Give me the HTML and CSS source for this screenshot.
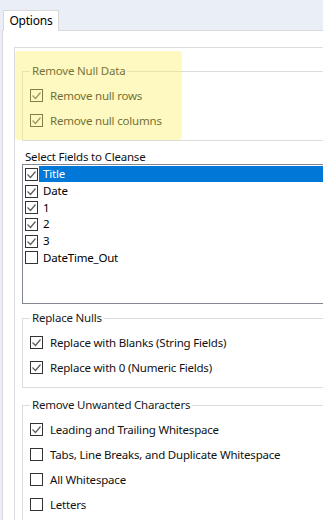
FILE: index.html
```html
<!DOCTYPE html>
<html>
<head>
<meta charset="utf-8">
<link rel="stylesheet" href="styles.css">
</head>
<body>
<div class="tabs"><div class="tab">Options</div></div>
<div class="panel">
  <div class="inner">
    <fieldset class="group g1">
      <legend>Remove Null Data</legend>
      <div class="row"><svg class="cb" viewBox="0 0 13 13"><rect x="0.5" y="0.5" width="12" height="12" fill="#fff" stroke="#333"/><path d="M2.5 6.5l3 3 5-6" fill="none" stroke="#5c5c5c" stroke-width="1.2"/></svg><span>Remove null rows</span></div>
      <div class="row"><svg class="cb" viewBox="0 0 13 13"><rect x="0.5" y="0.5" width="12" height="12" fill="#fff" stroke="#333"/><path d="M2.5 6.5l3 3 5-6" fill="none" stroke="#5c5c5c" stroke-width="1.2"/></svg><span>Remove null columns</span></div>
    </fieldset>
    <div class="list-label">Select Fields to Cleanse</div>
    <div class="listbox">
      <div class="item"><svg class="cb" viewBox="0 0 13 13"><rect x="0.5" y="0.5" width="12" height="12" fill="#fff" stroke="#333"/><path d="M2.5 6.5l3 3 5-6" fill="none" stroke="#5c5c5c" stroke-width="1.2"/></svg><span class="txt sel">Title</span></div>
      <div class="item"><svg class="cb" viewBox="0 0 13 13"><rect x="0.5" y="0.5" width="12" height="12" fill="#fff" stroke="#333"/><path d="M2.5 6.5l3 3 5-6" fill="none" stroke="#5c5c5c" stroke-width="1.2"/></svg><span class="txt">Date</span></div>
      <div class="item"><svg class="cb" viewBox="0 0 13 13"><rect x="0.5" y="0.5" width="12" height="12" fill="#fff" stroke="#333"/><path d="M2.5 6.5l3 3 5-6" fill="none" stroke="#5c5c5c" stroke-width="1.2"/></svg><span class="txt">1</span></div>
      <div class="item"><svg class="cb" viewBox="0 0 13 13"><rect x="0.5" y="0.5" width="12" height="12" fill="#fff" stroke="#333"/><path d="M2.5 6.5l3 3 5-6" fill="none" stroke="#5c5c5c" stroke-width="1.2"/></svg><span class="txt">2</span></div>
      <div class="item"><svg class="cb" viewBox="0 0 13 13"><rect x="0.5" y="0.5" width="12" height="12" fill="#fff" stroke="#333"/><path d="M2.5 6.5l3 3 5-6" fill="none" stroke="#5c5c5c" stroke-width="1.2"/></svg><span class="txt">3</span></div>
      <div class="item"><svg class="cb" viewBox="0 0 13 13"><rect x="0.5" y="0.5" width="12" height="12" fill="#fff" stroke="#333"/></svg><span class="txt">DateTime_Out</span></div>
    </div>
    <fieldset class="group g2">
      <legend>Replace Nulls</legend>
      <div class="row"><svg class="cb" viewBox="0 0 13 13"><rect x="0.5" y="0.5" width="12" height="12" fill="#fff" stroke="#333"/><path d="M2.5 6.5l3 3 5-6" fill="none" stroke="#5c5c5c" stroke-width="1.2"/></svg><span>Replace with Blanks (String Fields)</span></div>
      <div class="row"><svg class="cb" viewBox="0 0 13 13"><rect x="0.5" y="0.5" width="12" height="12" fill="#fff" stroke="#333"/><path d="M2.5 6.5l3 3 5-6" fill="none" stroke="#5c5c5c" stroke-width="1.2"/></svg><span>Replace with 0 (Numeric Fields)</span></div>
    </fieldset>
    <fieldset class="group g3">
      <legend>Remove Unwanted Characters</legend>
      <div class="row"><svg class="cb" viewBox="0 0 13 13"><rect x="0.5" y="0.5" width="12" height="12" fill="#fff" stroke="#333"/><path d="M2.5 6.5l3 3 5-6" fill="none" stroke="#5c5c5c" stroke-width="1.2"/></svg><span>Leading and Trailing Whitespace</span></div>
      <div class="row"><svg class="cb" viewBox="0 0 13 13"><rect x="0.5" y="0.5" width="12" height="12" fill="#fff" stroke="#333"/></svg><span>Tabs, Line Breaks, and Duplicate Whitespace</span></div>
      <div class="row"><svg class="cb" viewBox="0 0 13 13"><rect x="0.5" y="0.5" width="12" height="12" fill="#fff" stroke="#333"/></svg><span>All Whitespace</span></div>
      <div class="row"><svg class="cb" viewBox="0 0 13 13"><rect x="0.5" y="0.5" width="12" height="12" fill="#fff" stroke="#333"/></svg><span>Letters</span></div>
    </fieldset>
  </div>
</div>
<div class="highlight"></div>
</body>
</html>
```
FILE: styles.css
```css
html, body {
  margin: 0;
  padding: 0;
}
body {
  background: #e9eef7;
  font-family: "Noto Sans", "DejaVu Sans", sans-serif;
  font-size: 11.5px;
  letter-spacing: -0.2px;
  color: #111;
  width: 323px;
  height: 520px;
  overflow: hidden;
  position: relative;
}
.tabs {
  height: 30px;
  padding: 10px 0 0 3px;
  box-sizing: border-box;
  display: flex;
}
.tab {
  box-sizing: border-box;
  width: 56px;
  height: 21px;
  margin-bottom: -1px;
  border: 1px solid #d9d9d9;
  border-bottom: none;
  background: #fff;
  text-align: center;
  line-height: 19px;
  font-size: 12px;
  color: #000;
  position: relative;
  z-index: 1;
}
.panel {
  margin-left: 2px;
  border-top: 1px solid #d9d9d9;
  border-left: 1px solid #d9d9d9;
  background: #fff;
  height: 490px;
  padding: 16px 0 0 11px;
  box-sizing: border-box;
  overflow: hidden;
}
.inner {
  width: 420px;
  height: 480px;
  border-top: 1px solid #dcdcdc;
  border-left: 1px solid #dcdcdc;
  padding-left: 7px;
  box-sizing: border-box;
  display: flex;
  flex-direction: column;
}
.inner > * {
  flex: none;
}
.group {
  margin: 0;
  padding: 4px 0 7px 7px;
  border: 1px solid #dcdcdc;
  border-right: none;
  min-width: 0;
}
.group legend {
  padding: 0 2px;
  line-height: 16px;
  color: #1a1a1a;
}
.g1 { margin-top: 15px; }
.g2 { margin-top: 6px; }
.g3 { margin-top: 9px; padding-bottom: 40px; }
.row {
  height: 25px;
  display: flex;
  align-items: center;
  white-space: nowrap;
}
.cb {
  width: 13px;
  height: 13px;
  flex: none;
  display: block;
}
.row .cb { margin-right: 7px; }
.list-label {
  margin-top: 9px;
  line-height: 14px;
  padding-left: 3px;
}
.listbox {
  box-sizing: border-box;
  height: 140px;
  border: 1px solid #828790;
  border-right: none;
  padding-top: 1px;
}
.item {
  height: 16.7px;
  display: flex;
  align-items: center;
}
.item .cb { margin-left: 2px; }
.txt {
  margin-left: 1px;
  padding-left: 4px;
  line-height: 16px;
  flex: 1;
  color: #000;
}
.txt.sel {
  background: #0078d7;
  color: #fff;
}
.highlight {
  position: absolute;
  left: 15px;
  top: 51px;
  width: 167px;
  height: 89px;
  background: rgba(250, 240, 100, 0.4);
  border-radius: 4px;
}
```
